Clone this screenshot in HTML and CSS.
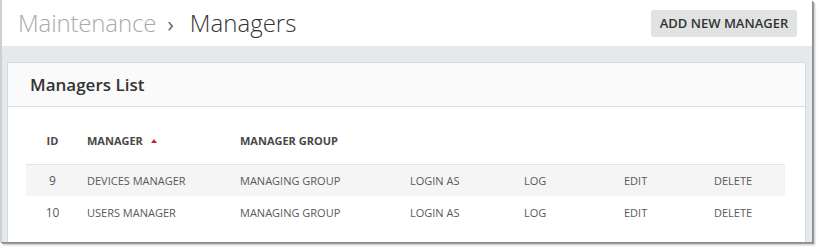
FILE: index.html
```html
<!DOCTYPE html>
<html>
<head>
<meta charset="utf-8">
<link rel="stylesheet" href="styles.css">
</head>
<body>
<div class="window">
  <header class="topbar">
    <h1 class="crumbs"><span class="crumb-parent">Maintenance</span><span class="crumb-sep">›</span><span class="crumb-current">Managers</span></h1>
    <button class="btn-add">ADD NEW MANAGER</button>
  </header>
  <main class="content">
    <section class="card">
      <div class="card-header">Managers List</div>
      <div class="card-body">
        <table class="grid">
          <colgroup>
            <col class="c-id"><col class="c-name"><col class="c-group"><col class="c-login"><col class="c-log"><col class="c-edit"><col class="c-del">
          </colgroup>
          <thead>
            <tr>
              <th class="center">ID</th>
              <th>MANAGER <span class="sort-up"></span></th>
              <th>MANAGER GROUP</th>
              <th></th><th></th><th></th><th></th>
            </tr>
          </thead>
          <tbody>
            <tr class="odd">
              <td class="center">9</td>
              <td>DEVICES MANAGER</td>
              <td>MANAGING GROUP</td>
              <td>LOGIN AS</td>
              <td>LOG</td>
              <td>EDIT</td>
              <td>DELETE</td>
            </tr>
            <tr>
              <td class="center">10</td>
              <td>USERS MANAGER</td>
              <td>MANAGING GROUP</td>
              <td>LOGIN AS</td>
              <td>LOG</td>
              <td>EDIT</td>
              <td>DELETE</td>
            </tr>
          </tbody>
        </table>
      </div>
    </section>
  </main>
</div>
</body>
</html>
```

FILE: styles.css
```css
* { box-sizing: border-box; }
html, body { margin: 0; padding: 0; background: #fff; }
body { width: 820px; height: 248px; overflow: hidden; font-family: "Open Sans", "Liberation Sans", sans-serif; }

.window {
  width: 812px;
  height: 242px;
  overflow: hidden;
  border-left: 2px solid #cdd0d1;
  background: #e5e9ec;
  box-shadow: 1px 1px 0 #8c8c8c, 2px 2px 0 #9a9a9a, 3px 3px 2px rgba(0,0,0,0.25);
  display: flex;
  flex-direction: column;
}

.topbar {
  height: 46px;
  background: #fff;
  display: flex;
  align-items: center;
  justify-content: space-between;
  padding: 0 15px 0 16px;
  flex-shrink: 0;
}

.crumbs {
  margin: 0;
  font-size: 24px;
  font-weight: 300;
  line-height: 32px;
  display: flex;
  align-items: baseline;
}
.crumb-parent { color: #a9a9a9; letter-spacing: -0.15px; }
.crumb-sep { color: #666; font-weight: 400; margin: 0 16px 0 11px; font-size: 22px; }
.crumb-current { color: #333; }

.btn-add {
  height: 27px;
  width: 146px;
  border: 0;
  border-radius: 3px;
  background: #e1e3e3;
  color: #333;
  font-family: "Open Sans", "Liberation Sans", sans-serif;
  font-size: 13px;
  font-weight: 600;
  padding: 0;
  margin-top: 0;
}

.content {
  flex: 1;
  padding: 16px 6px 0 5px;
}

.card {
  background: #fff;
  border: 1px solid #d6dadd;
  height: 220px;
}

.card-header {
  height: 44px;
  background: #fafafa;
  border-bottom: 1px solid #dcdcdc;
  padding-left: 22px;
  font-size: 17px;
  font-weight: 600;
  color: #333;
  line-height: 44px;
}

.card-body {
  padding: 10px 20px 0 18px;
}

.grid {
  width: 759px;
  table-layout: fixed;
  border-collapse: collapse;
  font-size: 11px;
}
.c-id { width: 53px; }
.c-name { width: 153px; }
.c-group { width: 170px; }
.c-login { width: 114px; }
.c-log { width: 100px; }
.c-edit { width: 90px; }
.c-del { width: 79px; }

.grid th {
  height: 47px;
  text-align: left;
  padding: 0 0 0 8px;
  font-weight: 700;
  color: #484848;
  border-bottom: 1px solid #e2e4e4;
  vertical-align: middle;
  white-space: nowrap;
}
.grid td {
  height: 32px;
  padding: 0 0 0 8px;
  color: #595959;
  vertical-align: middle;
  white-space: nowrap;
}
.grid .center { text-align: center; padding: 0; }
.grid td.center { font-size: 12px; }
.grid tr.odd td { background: #f4f5f4; }

.sort-up {
  display: inline-block;
  width: 0; height: 0;
  border-left: 3px solid transparent;
  border-right: 3px solid transparent;
  border-bottom: 4px solid #c4262c;
  margin-left: 5px;
  vertical-align: 2px;
}
```
